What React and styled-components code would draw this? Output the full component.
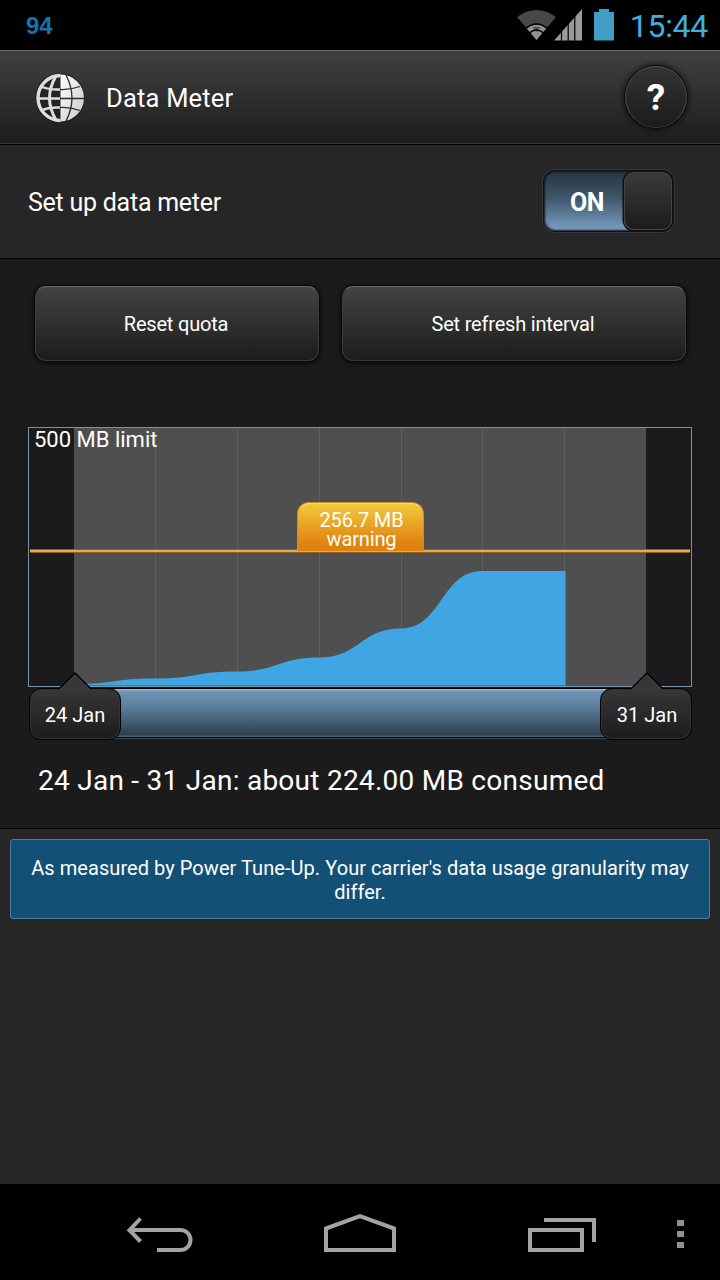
import React from "react";
import styled, { createGlobalStyle } from 'styled-components'

const GlobalStyle = createGlobalStyle`
	* {
		box-sizing: border-box;
	}
	body {
		margin: 0;
		background-color: #000;
		color: #fff;
		font-family: Roboto, "Noto Sans", sans-serif;
	}
`

const Screen = styled.div`
	width: 720px;
	height: 1280px;
	display: flex;
	flex-direction: column;
	overflow: hidden;
`

/* Status bar */
const StatusBar = styled.div`
	height: 50px;
	padding: 0 12px 0 26px;
	display: flex;
	align-items: center;
	justify-content: space-between;
	background-color: #000;
`

const BatteryLevel = styled.span`
	padding-top: 2px;
	font: bold 24px/28px "Liberation Sans", sans-serif;
	color: #1674ab;
`

const StatusIcons = styled.div`
	display: flex;
	align-items: center;
`

const BatterySvg = styled.svg`
	margin-left: 12px;
`

const Clock = styled.span`
	margin-left: 16px;
	padding-top: 1px;
	font-size: 32px;
	line-height: 40px;
	letter-spacing: -0.3px;
	color: #42afdb;
`

/* Title bar */
const Header = styled.header`
	height: 95px;
	padding: 0 33px 0 35px;
	display: flex;
	align-items: center;
	border-top: 1px solid #6a6a6a;
	border-bottom: 1px solid #000;
	background: linear-gradient(#414141, #1c1c1c);
	box-shadow: inset 0 -1px #363636;
`

const Title = styled.h1`
	flex: 1;
	margin: 0 0 0 21px;
	padding-top: 1px;
	font-size: 25.5px;
	font-weight: 400;
	letter-spacing: 0.2px;
`

const HelpButton = styled.button`
	width: 62px;
	height: 62px;
	margin-top: -1px;
	padding: 1px 0 0;
	border: 1px solid #484848;
	border-bottom-color: #333;
	border-radius: 50%;
	background: linear-gradient(#333, #1c1c1c);
	box-shadow: 0 0 0 1px #0a0a0a, 0 0 5px 3px rgba(0, 0, 0, 0.45);
	color: #fff;
	font: 700 37px/58px Roboto, sans-serif;
`

/* Setup row */
const SetupRow = styled.div`
	height: 114px;
	padding: 0 46px 0 28px;
	display: flex;
	align-items: center;
	justify-content: space-between;
	border-bottom: 1px solid #000;
	background-color: #262626;
`

const SetupLabel = styled.span`
	padding-top: 1px;
	font-size: 25px;
	letter-spacing: -0.25px;
`

const Toggle = styled.div`
	width: 131px;
	height: 62px;
	margin-top: -1px;
	padding: 1px;
	display: flex;
	border: 1px solid #101315;
	border-radius: 12px;
	background: linear-gradient(#263440, #3f566a 45%, #7ba0c4);
	box-shadow: 0 0 0 1px #363636, inset 0 0 2px 1px #101820;
`

const ToggleLabel = styled.span`
	flex: 1;
	padding: 2px 0 0 5px;
	line-height: 58px;
	text-align: center;
	font-size: 25px;
	font-weight: 700;
	letter-spacing: -0.5px;
`

const ToggleKnob = styled.span`
	width: 48px;
	border: 1px solid #444;
	border-radius: 10px;
	background: linear-gradient(#3a3a3a, #1c1c1c);
	box-shadow: 0 0 0 1.5px #111;
`

/* Usage panel */
const UsagePanel = styled.section`
	height: 570px;
	padding: 27px 28px 0;
	border-bottom: 1px solid #000;
	background-color: #1b1b1b;
`

const ButtonRow = styled.div`
	display: flex;
	gap: 23px;
	padding-left: 7px;
`

const Button = styled.button`
	flex: 0 0 ${props => props.$width}px;
	height: 75px;
	padding: 1px 2px 0 0;
	border: 1px solid #3a3a3a;
	border-top-color: #666;
	border-radius: 11px;
	background: linear-gradient(#434343, #1c1c1c);
	box-shadow: 0 0 0 1px #0b0b0b, 0 1px 4px 2px rgba(0, 0, 0, 0.55);
	color: #fff;
	font: 400 20px/24px Roboto, sans-serif;
	letter-spacing: -0.2px;
`

const ChartFrame = styled.div`
	position: relative;
	height: 260px;
	margin-top: 66px;
	border: 1px solid #7695aa;
`

const ChartSvg = styled.svg`
	display: block;
`

const LimitLabel = styled.span`
	position: absolute;
	top: 0;
	left: 5px;
	font-size: 22px;
	line-height: 24px;
`

const WarningLine = styled.div`
	position: absolute;
	top: 121px;
	left: 1px;
	right: 1px;
	height: 4px;
	border: 1px solid #94601f;
	border-width: 1px 0;
	background-color: #dcae5c;
`

const WarningBadge = styled.div`
	position: absolute;
	top: 74px;
	left: 268px;
	width: 127px;
	height: 49px;
	padding: 8px 0 0 2px;
	border: 1px solid #d28b1c;
	border-bottom: 0;
	border-radius: 12px 12px 0 0;
	background: linear-gradient(#f2cb3e, #e0820f 85%);
	box-shadow: inset 0 2px 1px -1px #fbe38a;
	text-align: center;
	font-size: 20px;
	line-height: 19px;
	letter-spacing: -0.15px;
`

const RangeSlider = styled.div`
	position: relative;
	height: 53px;
	display: flex;
	justify-content: space-between;
	padding: 1px 0 0 1px;
`

const RangeTrack = styled.div`
	position: absolute;
	top: 1px;
	left: 80px;
	right: 80px;
	height: 50px;
	border-top: 1px solid #000;
	border-bottom: 1px solid #000;
	background: linear-gradient(#9bb4c8 0 1px, #7096ba 2px, #5d7f9c 35%, #2e3f4e 46px, #4a6173 47px);
	box-shadow: 0 1px #34495a;
`

const HandleBox = styled.div`
	position: relative;
	width: 92px;
	height: 52px;
	padding: 1px 0 0 ${props => props.$shift * 2}px;
	border: 1px solid #000;
	border-radius: 12px;
	background: linear-gradient(#373737, #1c1c1c);
	box-shadow: inset 0 0 0 1px #333;
	line-height: 50px;
	text-align: center;
	font-size: 20px;
`

const HandlePointer = styled.svg`
	position: absolute;
	top: -17px;
	left: ${props => 27 + props.$shift}px;
`

const Summary = styled.p`
	margin: 0;
	padding: 24px 0 0 10px;
	font-size: 28px;
	line-height: 34px;
	letter-spacing: 0.26px;
	white-space: nowrap;
`

/* Bottom note */
const NoteArea = styled.section`
	flex: 1;
	padding: 10px;
	background-color: #262626;
`

const Note = styled.p`
	height: 80px;
	margin: 0;
	padding: 16px 16px 0;
	border: 1px solid #4f7d9b;
	border-radius: 3px;
	background-color: #135076;
	text-align: center;
	font-size: 20px;
	line-height: 24px;
	letter-spacing: 0.06px;
`

const NavBar = styled.nav`
	height: 96px;
	padding: 28px 0 0 125px;
	display: grid;
	grid-template-columns: 198px 204px 150px 8px;
	align-items: start;
	background-color: #000;
`

const DAYS = [0, 81, 163, 245, 327, 408]
const USAGE = [256, 250.5, 243.5, 229.5, 200.5, 143]

// smooth steps between days, flat at each day mark
function areaPath() {
	let d = `M45 257.500V${USAGE[0]}`
	for (let i = 1; i < DAYS.length; i++) {
		let x0 = 45 + DAYS[i - 1]
		let x1 = 45 + DAYS[i]
		let mid = (x0 + x1) / 2
		d += `C${mid} ${USAGE[i - 1]} ${mid} ${USAGE[i]} ${x1} ${USAGE[i]}`
	}
	return d + 'H536.500V257.500Z'
}

function GlobeIcon() {
	return (
		<svg width="50" height="52" viewBox="1 0 50 52">
			<defs>
				<linearGradient id="globe" x1="0" y1="0" x2="1" y2="1">
					<stop offset="0" stopColor="#fff" />
					<stop offset="1" stopColor="#c9c9c5" />
				</linearGradient>
			</defs>
			<circle cx="26" cy="26" r="25" fill="#1c1c1c" opacity="0.6" />
			<path d="M26.500 2.500A23.500 23.500 0 0 1 26.500 49.500Z" fill="url(#globe)" />
			<g fill="none" stroke="#2b2b2b" strokeWidth="1.300">
				<path d="M26 26.500H50M26 17.500Q36 18 46 14.500M26 35.500Q36 35 46 38.500" />
				<path d="M32 3Q44 26 32 49" />
			</g>
			<g fill="none" stroke="#dededc" strokeWidth="2.400">
				<path d="M26.500 3.500A22.500 22.500 0 0 0 26.500 48.500" strokeWidth="3.400" />
				<path d="M4 26.500H26M7 14.500Q15 18 26 17.500M7 38.500Q15 35 26 35.500" />
				<path d="M22 4Q9 26 22 48" strokeWidth="3" />
			</g>
		</svg>
	)
}

function WifiIcon() {
	return (
		<svg width="39" height="32" viewBox="0.500 0 39 32">
			<path d="M20 31L0.500 8Q20-6 39.500 8Z" fill="#484848" />
			<path d="M20 31L10.300 19.500Q20 11.500 29.700 19.500Z" fill="#929292" />
			<path d="M16 18.500L20 23L24 18.500Q20 17 16 18.500Z" fill="#555" />
			<path d="M8 20.500Q20 9.500 32 20.500M12.500 24.500Q20 17.500 27.500 24.500" fill="none" stroke="#000" strokeWidth="1.500" />
		</svg>
	)
}

const SignalSvg = styled.svg`
	margin-left: -2px;
`

function SignalIcon() {
	return (
		<SignalSvg width="28" height="32" viewBox="0 0 28 32">
			<path d="M0 31.500L28 0V31.500Z" fill="#999" />
			<path d="M7.500 0V32M14.200 0V32M20.800 0V32" stroke="#000" strokeWidth="1.200" />
		</SignalSvg>
	)
}

function BatteryIcon() {
	return (
		<BatterySvg width="20" height="32" viewBox="0 0 20 32">
			<path d="M5 0H15V3H20V31.500H0V3H5Z" fill="#419dc4" />
		</BatterySvg>
	)
}

function UsageChart() {
	return (
		<ChartFrame>
			<ChartSvg width="662" height="258" viewBox="0 0 662 258">
				<rect x="45" width="572" height="258" fill="#4f4f4f" />
				{[126, 208, 290, 372, 453, 535].map(x => (
					<rect key={x} x={x} width="1" height="258" fill="#5e5e5e" />
				))}
				<path d={areaPath()} fill="#3fa6e3" />
			</ChartSvg>
			<LimitLabel>500 MB limit</LimitLabel>
			<WarningLine />
			<WarningBadge>256.7 MB<br />warning</WarningBadge>
		</ChartFrame>
	)
}

function Handle({ shift = 0, children }) {
	return (
		<HandleBox $shift={shift}>
			<HandlePointer $shift={shift} width="36" height="19" viewBox="0 0 36 19">
				<path d="M2 17L18 1L34 17V19H2Z" fill="#373737" />
				<path d="M2 17L18 1L34 17" fill="none" stroke="#000" strokeWidth="1.500" />
				<path d="M3 18L18 3L33 18" fill="none" stroke="#444" />
			</HandlePointer>
			{children}
		</HandleBox>
	)
}

function NavButtons() {
	return (
		<NavBar>
			<svg width="70" height="44" viewBox="125 1212 70 44" fill="none" stroke="#a3a3a3" strokeWidth="4">
				<path d="M140.500 1218.500L129.500 1230.200L140.500 1241.500M130 1230H180.500A10 10 0 0 1 180.500 1250H157" />
			</svg>
			<svg width="74" height="44" viewBox="323 1212 74 44" fill="none" stroke="#a3a3a3" strokeWidth="4">
				<path d="M326 1228.500L360 1216.200L394 1228.500V1250H326Z" />
			</svg>
			<svg width="70" height="44" viewBox="527 1212 70 44" fill="none" stroke="#a3a3a3" strokeWidth="4">
				<path d="M530 1230H582V1250H530ZM544 1220H594V1242" />
			</svg>
			<svg width="8" height="44" viewBox="677 1212 8 44" fill="#909090">
				<path d="M677 1220H684V1226H677ZM677 1231H684V1237H677ZM677 1242H684V1248H677Z" />
			</svg>
		</NavBar>
	)
}

export default function App() {
	return (
		<Screen>
			<GlobalStyle />
			<StatusBar>
				<BatteryLevel>94</BatteryLevel>
				<StatusIcons>
					<WifiIcon />
					<SignalIcon />
					<BatteryIcon />
					<Clock>15:44</Clock>
				</StatusIcons>
			</StatusBar>
			<Header>
				<GlobeIcon />
				<Title>Data Meter</Title>
				<HelpButton>?</HelpButton>
			</Header>
			<SetupRow>
				<SetupLabel>Set up data meter</SetupLabel>
				<Toggle>
					<ToggleLabel>ON</ToggleLabel>
					<ToggleKnob />
				</Toggle>
			</SetupRow>
			<UsagePanel>
				<ButtonRow>
					<Button $width={284}>Reset quota</Button>
					<Button $width={344}>Set refresh interval</Button>
				</ButtonRow>
				<UsageChart />
				<RangeSlider>
					<RangeTrack />
					<Handle>24 Jan</Handle>
					<Handle shift={1}>31 Jan</Handle>
				</RangeSlider>
				<Summary>24 Jan - 31 Jan: about 224.00 MB consumed</Summary>
			</UsagePanel>
			<NoteArea>
				<Note>As measured by Power Tune-Up. Your carrier's data usage granularity may differ.</Note>
			</NoteArea>
			<NavButtons />
		</Screen>
	)
}
